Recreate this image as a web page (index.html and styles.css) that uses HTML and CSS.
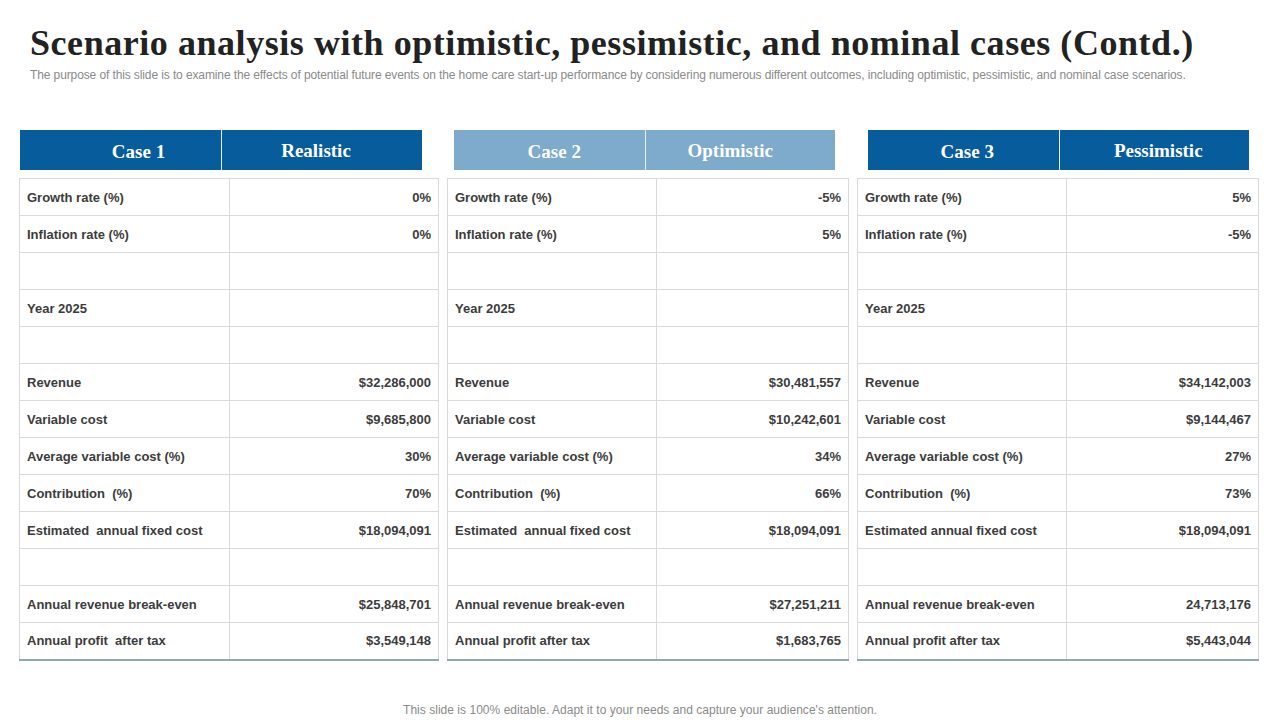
FILE: index.html
```html
<!DOCTYPE html>
<html>
<head>
<meta charset="utf-8">
<link rel="stylesheet" href="styles.css">
</head>
<body>
<div class="slide">
  <h1 class="title">Scenario analysis with optimistic, pessimistic, and nominal cases (Contd.)</h1>
  <p class="subtitle">The purpose of this slide is to examine the effects of potential future events on the home care start-up performance by considering numerous different outcomes, including optimistic, pessimistic, and nominal case scenarios.</p>

  <div class="cases">
    <div class="case case-1">
      <div class="head dark">
        <div class="hcell hcase">Case 1</div>
        <div class="hcell hname">Realistic</div>
      </div>
      <table class="grid">
        <colgroup><col class="c-label"><col></colgroup>
        <tr><td>Growth rate (%)</td><td>0%</td></tr>
        <tr><td>Inflation rate (%)</td><td>0%</td></tr>
        <tr><td></td><td></td></tr>
        <tr><td>Year 2025</td><td></td></tr>
        <tr><td></td><td></td></tr>
        <tr><td>Revenue</td><td>$32,286,000</td></tr>
        <tr><td>Variable cost</td><td>$9,685,800</td></tr>
        <tr><td>Average variable cost (%)</td><td>30%</td></tr>
        <tr><td>Contribution &nbsp;(%)</td><td>70%</td></tr>
        <tr><td>Estimated &nbsp;annual fixed cost</td><td>$18,094,091</td></tr>
        <tr><td></td><td></td></tr>
        <tr><td>Annual revenue break-even</td><td>$25,848,701</td></tr>
        <tr><td>Annual profit &nbsp;after tax</td><td>$3,549,148</td></tr>
      </table>
    </div>

    <div class="case case-2">
      <div class="head light">
        <div class="hcell hcase">Case 2</div>
        <div class="hcell hname">Optimistic</div>
      </div>
      <table class="grid">
        <colgroup><col class="c-label"><col></colgroup>
        <tr><td>Growth rate (%)</td><td>-5%</td></tr>
        <tr><td>Inflation rate (%)</td><td>5%</td></tr>
        <tr><td></td><td></td></tr>
        <tr><td>Year 2025</td><td></td></tr>
        <tr><td></td><td></td></tr>
        <tr><td>Revenue</td><td>$30,481,557</td></tr>
        <tr><td>Variable cost</td><td>$10,242,601</td></tr>
        <tr><td>Average variable cost (%)</td><td>34%</td></tr>
        <tr><td>Contribution &nbsp;(%)</td><td>66%</td></tr>
        <tr><td>Estimated &nbsp;annual fixed cost</td><td>$18,094,091</td></tr>
        <tr><td></td><td></td></tr>
        <tr><td>Annual revenue break-even</td><td>$27,251,211</td></tr>
        <tr><td>Annual profit after tax</td><td>$1,683,765</td></tr>
      </table>
    </div>

    <div class="case case-3">
      <div class="head dark">
        <div class="hcell hcase">Case 3</div>
        <div class="hcell hname">Pessimistic</div>
      </div>
      <table class="grid">
        <colgroup><col class="c-label"><col></colgroup>
        <tr><td>Growth rate (%)</td><td>5%</td></tr>
        <tr><td>Inflation rate (%)</td><td>-5%</td></tr>
        <tr><td></td><td></td></tr>
        <tr><td>Year 2025</td><td></td></tr>
        <tr><td></td><td></td></tr>
        <tr><td>Revenue</td><td>$34,142,003</td></tr>
        <tr><td>Variable cost</td><td>$9,144,467</td></tr>
        <tr><td>Average variable cost (%)</td><td>27%</td></tr>
        <tr><td>Contribution &nbsp;(%)</td><td>73%</td></tr>
        <tr><td>Estimated annual fixed cost</td><td>$18,094,091</td></tr>
        <tr><td></td><td></td></tr>
        <tr><td>Annual revenue break-even</td><td>24,713,176</td></tr>
        <tr><td>Annual profit after tax</td><td>$5,443,044</td></tr>
      </table>
    </div>
  </div>

  <p class="footer">This slide is 100% editable. Adapt it to your needs and capture your audience's attention.</p>
</div>
</body>
</html>
```

FILE: styles.css
```css
* { box-sizing: border-box; }

html, body {
  margin: 0;
  padding: 0;
  background: #ffffff;
}

.slide {
  width: 1280px;
  height: 720px;
  overflow: hidden;
  position: relative;
  font-family: "Liberation Sans", Arial, sans-serif;
}

.title {
  margin: 0;
  padding: 22px 0 0 30px;
  font-family: "Liberation Serif", "Times New Roman", serif;
  font-weight: bold;
  font-size: 36px;
  line-height: 42px;
  color: #222222;
  letter-spacing: 0.55px;
  white-space: nowrap;
}

.subtitle {
  margin: 4px 0 0 30px;
  font-size: 12px;
  line-height: 14px;
  color: #8a8a8a;
  letter-spacing: -0.11px;
  white-space: nowrap;
}

.cases {
  display: flex;
  gap: 8px;
  margin: 48px 0 0 19px;
}

.case-1 { width: 420px; }
.case-2 { width: 402px; }
.case-3 { width: 402px; }

.head {
  display: flex;
  height: 40px;
  color: #ffffff;
  font-family: "Liberation Serif", "Times New Roman", serif;
  font-weight: bold;
  font-size: 19px;
}

.case-1 .head { width: 402px; margin-left: 1px; }
.case-2 .head { width: 381px; margin-left: 7px; }
.case-3 .head { width: 381px; margin-left: 11px; }

.head.dark { background: #075c9c; }
.head.light { background: #7eaacb; }

.hcell {
  flex: 0 0 50%;
  display: flex;
  align-items: center;
  justify-content: center;
  padding-top: 1px;
}

.hcell + .hcell {
  border-left: 1px solid #e8f0f6;
}

.hcase {
  padding-top: 4px;
}

.case-1 .hcase { padding-left: 36px; }
.case-1 .hname { padding-right: 12px; }
.case-2 .hcase { padding-left: 10px; }
.case-2 .hname { padding-right: 20px; }
.case-3 .hcase { padding-left: 8px; }
.case-3 .hname { padding-left: 8px; }

.grid {
  margin-top: 8px;
  width: 100%;
  border-collapse: collapse;
  table-layout: fixed;
  border-bottom: 2px solid #8fa9b3;
}

.case-1 .c-label { width: 210px; }
.case-2 .c-label,
.case-3 .c-label { width: 209px; }

.grid td {
  height: 37px;
  border: 1px solid #dadada;
  font-size: 13px;
  font-weight: bold;
  color: #3c3c3c;
  padding: 0 7px;
  white-space: nowrap;
  vertical-align: middle;
}

.grid td:first-child {
  text-align: left;
}

.grid td:last-child {
  text-align: right;
}

.grid tr:last-child td {
  border-bottom: 2px solid #8fa9b3;
}

.footer {
  position: absolute;
  left: 0;
  right: 0;
  top: 702px;
  margin: 0;
  text-align: center;
  font-size: 12px;
  line-height: 16px;
  color: #8a8a8a;
  letter-spacing: 0.03px;
}
```
